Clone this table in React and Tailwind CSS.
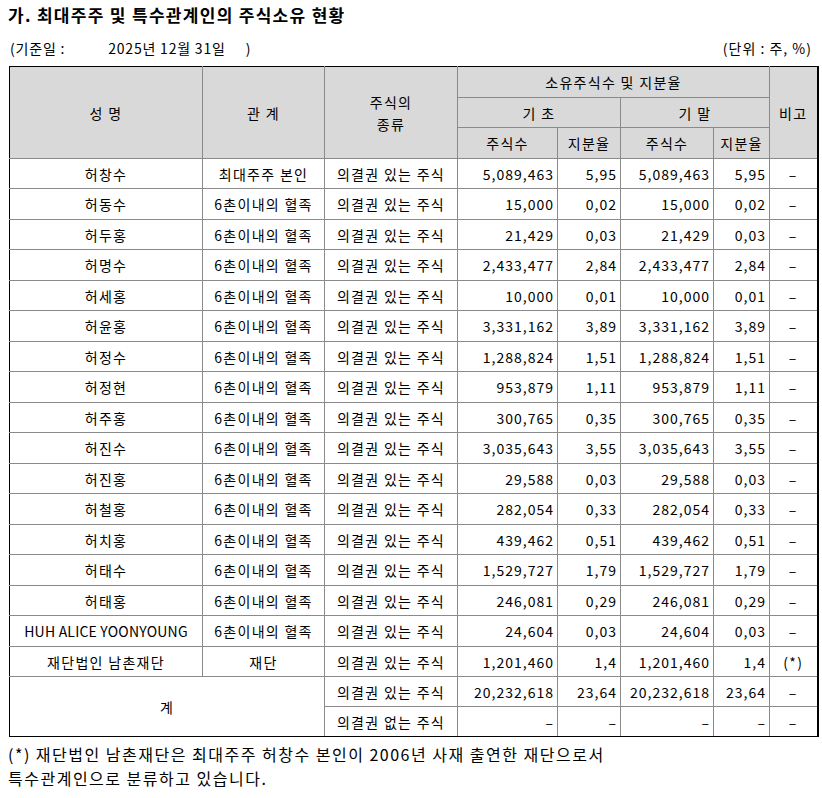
import React from "react";

const rows = [
  ["허창수", "최대주주 본인", "5,089,463", "5,95", "–"],
  ["허동수", "6촌이내의 혈족", "15,000", "0,02", "–"],
  ["허두홍", "6촌이내의 혈족", "21,429", "0,03", "–"],
  ["허명수", "6촌이내의 혈족", "2,433,477", "2,84", "–"],
  ["허세홍", "6촌이내의 혈족", "10,000", "0,01", "–"],
  ["허윤홍", "6촌이내의 혈족", "3,331,162", "3,89", "–"],
  ["허정수", "6촌이내의 혈족", "1,288,824", "1,51", "–"],
  ["허정현", "6촌이내의 혈족", "953,879", "1,11", "–"],
  ["허주홍", "6촌이내의 혈족", "300,765", "0,35", "–"],
  ["허진수", "6촌이내의 혈족", "3,035,643", "3,55", "–"],
  ["허진홍", "6촌이내의 혈족", "29,588", "0,03", "–"],
  ["허철홍", "6촌이내의 혈족", "282,054", "0,33", "–"],
  ["허치홍", "6촌이내의 혈족", "439,462", "0,51", "–"],
  ["허태수", "6촌이내의 혈족", "1,529,727", "1,79", "–"],
  ["허태홍", "6촌이내의 혈족", "246,081", "0,29", "–"],
  ["HUH ALICE YOONYOUNG", "6촌이내의 혈족", "24,604", "0,03", "–"],
  ["재단법인 남촌재단", "재단", "1,201,460", "1,4", "(*)"],
];

const font = { fontFamily: '"Noto Sans CJK KR", "Noto Sans", sans-serif' };
const b = "border border-[#8a8a8a]";
const th = `${b} bg-[#d9d9d9] font-normal text-center p-0`;
const td = `${b} p-0`;
const num = `${td} text-right pr-[3px] tracking-[1px]`;

export default function App() {
  return (
    <div className="w-[822px] h-[798px] bg-white text-black" style={font}>
      <div className="pl-[8px] pt-[3px] h-[30px] text-[17px] font-bold leading-[24px] tracking-[1.3px]">
        가. 최대주주 및 특수관계인의 주식소유 현황
      </div>
      <div className="flex justify-between items-center h-[36px] pl-[10px] pr-[10px] text-[14px] leading-[20px]">
        <div className="flex tracking-[0.8px]">
          <span>(기준일 :</span>
          <span className="ml-[43px]">2025년 12월 31일</span>
          <span className="ml-[20px]">)</span>
        </div>
        <div className="tracking-[1px]">(단위 : 주, %)</div>
      </div>
      <div className="pl-[9px]">
        <table className="border-collapse table-fixed w-[809px] text-[14px] leading-[18px] tracking-[1.3px] border-t border-l border-b border-r-2 border-black">
          <colgroup>
            <col className="w-[193px]" />
            <col className="w-[122px]" />
            <col className="w-[133px]" />
            <col className="w-[100px]" />
            <col className="w-[63px]" />
            <col className="w-[93px]" />
            <col className="w-[56px]" />
            <col className="w-[48px]" />
          </colgroup>
          <thead>
            <tr className="h-[31px]">
              <th rowSpan={3} className={`${th} border-t-black border-l-black`}>성 명</th>
              <th rowSpan={3} className={`${th} border-t-black`}>관 계</th>
              <th rowSpan={3} className={`${th} border-t-black`}>
                주식의
                <br />
                <span className="inline-block mt-[4px]">종류</span>
              </th>
              <th colSpan={4} className={`${th} border-t-black`}>소유주식수 및 지분율</th>
              <th rowSpan={3} className={`${th} border-t-black border-r-black`}>비고</th>
            </tr>
            <tr className="h-[30px]">
              <th colSpan={2} className={th}>기 초</th>
              <th colSpan={2} className={th}>기 말</th>
            </tr>
            <tr className="h-[31px]">
              <th className={th}>주식수</th>
              <th className={th}>지분율</th>
              <th className={th}>주식수</th>
              <th className={th}>지분율</th>
            </tr>
          </thead>
          <tbody>
            {rows.map((r, i) => (
              <tr key={i} className={i % 2 === 0 ? "h-[30px]" : "h-[31px]"}>
                <td className={`${td} text-center border-l-black ${/^[A-Z]/.test(r[0]) ? "tracking-[0.2px]" : ""}`}>{r[0]}</td>
                <td className={`${td} text-center`}>{r[1]}</td>
                <td className={`${td} text-center`}>의결권 있는 주식</td>
                <td className={num}>{r[2]}</td>
                <td className={num}>{r[3]}</td>
                <td className={num}>{r[2]}</td>
                <td className={num}>{r[3]}</td>
                <td className={`${td} text-center border-r-black`}>{r[4]}</td>
              </tr>
            ))}
            <tr className="h-[30px]">
              <td rowSpan={2} colSpan={2} className={`${td} text-center border-l-black border-b-black`}>계</td>
              <td className={`${td} text-center`}>의결권 있는 주식</td>
              <td className={num}>20,232,618</td>
              <td className={num}>23,64</td>
              <td className={num}>20,232,618</td>
              <td className={num}>23,64</td>
              <td className={`${td} text-center border-r-black`}>–</td>
            </tr>
            <tr className="h-[30px]">
              <td className={`${td} text-center border-b-black`}>의결권 없는 주식</td>
              <td className={`${num} border-b-black`}>–</td>
              <td className={`${num} border-b-black`}>–</td>
              <td className={`${num} border-b-black`}>–</td>
              <td className={`${num} border-b-black`}>–</td>
              <td className={`${td} text-center border-b-black border-r-black`}>–</td>
            </tr>
          </tbody>
        </table>
      </div>
      <div className="pl-[8px] pt-[5px] text-[16px] leading-[24px] tracking-[1.5px]">
        <div>(*) 재단법인 남촌재단은 최대주주 허창수 본인이 2006년 사재 출연한 재단으로서</div>
        <div>특수관계인으로 분류하고 있습니다.</div>
      </div>
    </div>
  );
}
